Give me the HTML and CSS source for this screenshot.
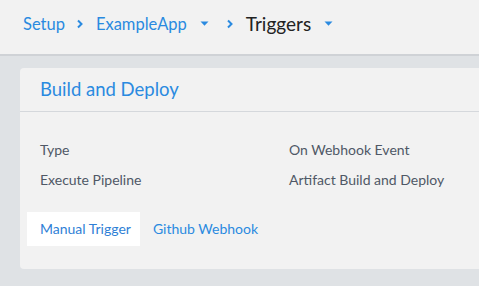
FILE: index.html
```html
<!DOCTYPE html>
<html lang="en">
<head>
    <meta charset="UTF-8">
    <title>Triggers</title>
    <link rel="stylesheet" href="styles.css">
</head>
<body>

    <div class="breadcrumb-bar">
        <a class="crumb">Setup</a>
        <svg class="chevron" width="8" height="10" viewBox="0 0 8 10"><path d="M2 1.5 L5.5 5 L2 8.5" fill="none" stroke="#2a8ae0" stroke-width="2"/></svg>
        <a class="crumb">ExampleApp</a>
        <svg class="caret" width="9" height="5" viewBox="0 0 9 5"><path d="M0.5 0.5 L8.5 0.5 L4.5 4.8 Z" fill="#2a8ae0"/></svg>
        <svg class="chevron" width="8" height="10" viewBox="0 0 8 10"><path d="M2 1.5 L5.5 5 L2 8.5" fill="none" stroke="#2a8ae0" stroke-width="2"/></svg>
        <span class="crumb-current">Triggers</span>
        <svg class="caret" width="9" height="5" viewBox="0 0 9 5"><path d="M0.5 0.5 L8.5 0.5 L4.5 4.8 Z" fill="#2a8ae0"/></svg>
    </div>

    <div class="content">
        <div class="trigger-card">
            <div class="card-header">Build and Deploy</div>
            <div class="card-body">
                <div class="detail-row">
                    <div class="detail-label">Type</div>
                    <div class="detail-value">On Webhook Event</div>
                </div>
                <div class="detail-row">
                    <div class="detail-label">Execute Pipeline</div>
                    <div class="detail-value">Artifact Build and Deploy</div>
                </div>
                <div class="tabs">
                    <div class="tab active">Manual Trigger</div>
                    <div class="tab">Github Webhook</div>
                </div>
            </div>
        </div>
    </div>

</body>
</html>
```

FILE: styles.css
```css
body {
    font-family: 'Lato', sans-serif;
    margin: 0;
    padding: 0;
    background-color: #dfe2e5;
    color: #4f5866;
    height: 286px;
    overflow: hidden;
}

.breadcrumb-bar {
    background: #f2f2f2;
    height: 56px;
    border-bottom: 2px solid #cfd2d6;
    display: flex;
    align-items: center;
    padding: 0 0 7px 23px;
    box-sizing: border-box;
}

.crumb {
    color: #2a8ae0;
    font-size: 16.5px;
}

.crumb-current {
    color: #222;
    font-size: 19px;
}

.chevron {
    margin: 0 12px 0 11px;
}

.caret {
    margin-left: 13px;
}

.caret + .chevron {
    margin-left: 17px;
}

.content {
    padding: 12px 0 0 20px;
}

.trigger-card {
    background: #f2f2f2;
    border-radius: 4px 0 0 4px;
    height: 201px;
}

.card-header {
    height: 43px;
    line-height: 42px;
    padding-left: 20px;
    font-size: 18.5px;
    color: #2a8ae0;
    border-bottom: 1px solid #d5d8dc;
}

.card-body {
    padding: 30px 0 0 20px;
}

.detail-row {
    display: flex;
    font-size: 14px;
    height: 30px;
    line-height: 16px;
}

.detail-label {
    width: 249px;
}

.tabs {
    display: flex;
    margin: 10px 0 0 -13px;
}

.tab {
    color: #2a8ae0;
    font-size: 14px;
    padding: 0 13px;
    height: 34px;
    line-height: 34px;
}

.tab.active {
    background: #fff;
    color: #2f7fd6;
    padding-right: 9px;
}
```
